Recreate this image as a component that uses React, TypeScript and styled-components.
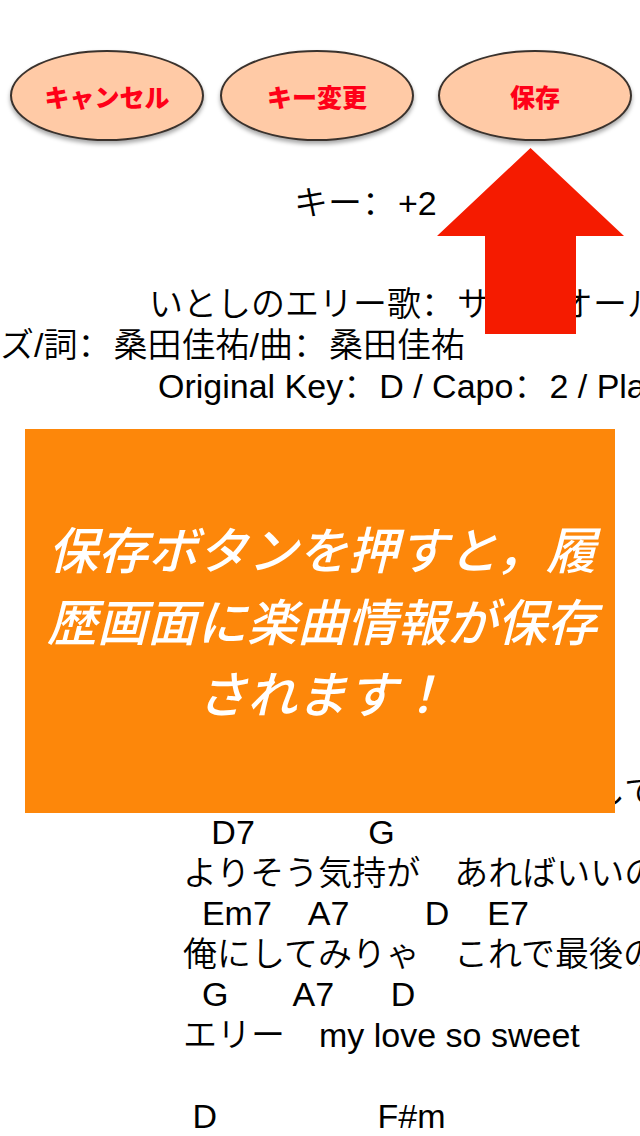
import React from 'react';
import styled, { createGlobalStyle } from 'styled-components';

const GlobalStyle = createGlobalStyle`
  *, *::before, *::after { box-sizing: border-box; }
  body {
    margin: 0;
    background: #fff;
    color: #000;
    font-family: 'Liberation Sans', 'Noto Sans CJK JP', sans-serif;
  }
`;

const Page = styled.main`
  position: relative;
  min-height: 100vh;
  padding-top: 50px;
  overflow: hidden;
`;

const Toolbar = styled.nav`
  display: grid;
  grid-template-columns: 25fr 12fr;
  column-gap: 24px;
  padding: 0 8px 0 10px;
`;

const EditGroup = styled.div`
  display: flex;
  gap: 16px;
`;

const SaveGroup = styled.div`
  position: relative;
  display: flex;
`;

const OvalButton = styled.button`
  flex: 1;
  height: 91px;
  padding: 0;
  border: 2px solid #3a322d;
  border-radius: 50%;
  background: #ffcaa6;
  box-shadow: 0 3px 4px rgba(0, 0, 0, 0.35);
  color: #ff0018;
  font-family: 'Noto Sans CJK JP', sans-serif;
  font-size: 25px;
  font-weight: 900;
  line-height: 36px;
  white-space: nowrap;
`;

const Arrow = styled.svg`
  position: absolute;
  top: 98px;
  left: 50%;
  z-index: 2;
  width: 187px;
  height: 186px;
  margin-left: -98px;
`;

const Text = styled.p<{ $indent: number; $height?: number }>`
  margin: 0;
  padding-left: ${(p) => p.$indent}px;
  height: ${(p) => p.$height ?? 41}px;
  font-size: 34px;
  font-weight: 350;
  line-height: ${(p) => p.$height ?? 41}px;
  white-space: pre;
`;

const KeyRow = styled.div`
  margin-top: 39px;
`;

const SongInfo = styled.header`
  margin-top: 60px;
`;

const Sheet = styled.section`
  margin-top: 327px;
`;

const WideColon = styled.span`
  margin-right: 2px;
  font-family: 'Noto Sans CJK SC', sans-serif;
`;

const Callout = styled.aside`
  position: absolute;
  top: 429px;
  left: 25px;
  right: 25px;
  z-index: 1;
  display: flex;
  align-items: center;
  justify-content: center;
  min-height: 384px;
  padding: 0 0 4px 4px;
  background: #fd870a;
`;

const CalloutText = styled.p`
  margin: 0;
  max-width: 560px;
  color: #fff;
  font-family: 'Noto Sans CJK JP', sans-serif;
  font-size: 50px;
  font-style: italic;
  font-weight: 500;
  line-height: 72px;
  text-align: center;
`;

const Colon = () => <WideColon lang="zh-CN">：</WideColon>;

const verses = [
  { chords: '', words: '　　　　　　　　　　　　して' },
  { chords: '   D7            G', words: 'よりそう気持が　あればいいの' },
  { chords: '  Em7    A7        D    E7', words: '俺にしてみりゃ　これで最後の' },
  { chords: '  G       A7      D', words: 'エリー　my love so sweet' },
];

export default function App() {
  return (
    <>
      <GlobalStyle />
      <Page lang="ja">
        <Toolbar>
          <EditGroup>
            <OvalButton type="button">キャンセル</OvalButton>
            <OvalButton type="button">キー変更</OvalButton>
          </EditGroup>
          <SaveGroup>
            <OvalButton type="button">保存</OvalButton>
            <Arrow viewBox="0 0 187 186" aria-hidden="true">
              <path d="M93.500 0L187 88H139V186H48V88H0Z" fill="#f51b00" />
            </Arrow>
          </SaveGroup>
        </Toolbar>

        <KeyRow>
          <Text $indent={294}>キー<Colon />+2</Text>
        </KeyRow>

        <SongInfo>
          <Text $indent={149}>いとしのエリー歌<Colon />サザンオール</Text>
          <Text $indent={0}>ズ/詞<Colon />桑田佳祐/曲<Colon />桑田佳祐</Text>
          <Text $indent={158}>Original Key<Colon />D / Capo<Colon />2 / Play</Text>
        </SongInfo>

        <Sheet>
          {verses.map((verse) => (
            <React.Fragment key={verse.words}>
              <Text $indent={183}>{verse.chords}</Text>
              <Text $indent={183} $height={40}>{verse.words}</Text>
            </React.Fragment>
          ))}
          <Text $indent={183}> </Text>
          <Text $indent={183}>{' D                 F#m'}</Text>
        </Sheet>

        <Callout>
          <CalloutText>保存ボタンを押すと，履歴画面に楽曲情報が保存されます！</CalloutText>
        </Callout>
      </Page>
    </>
  );
}
